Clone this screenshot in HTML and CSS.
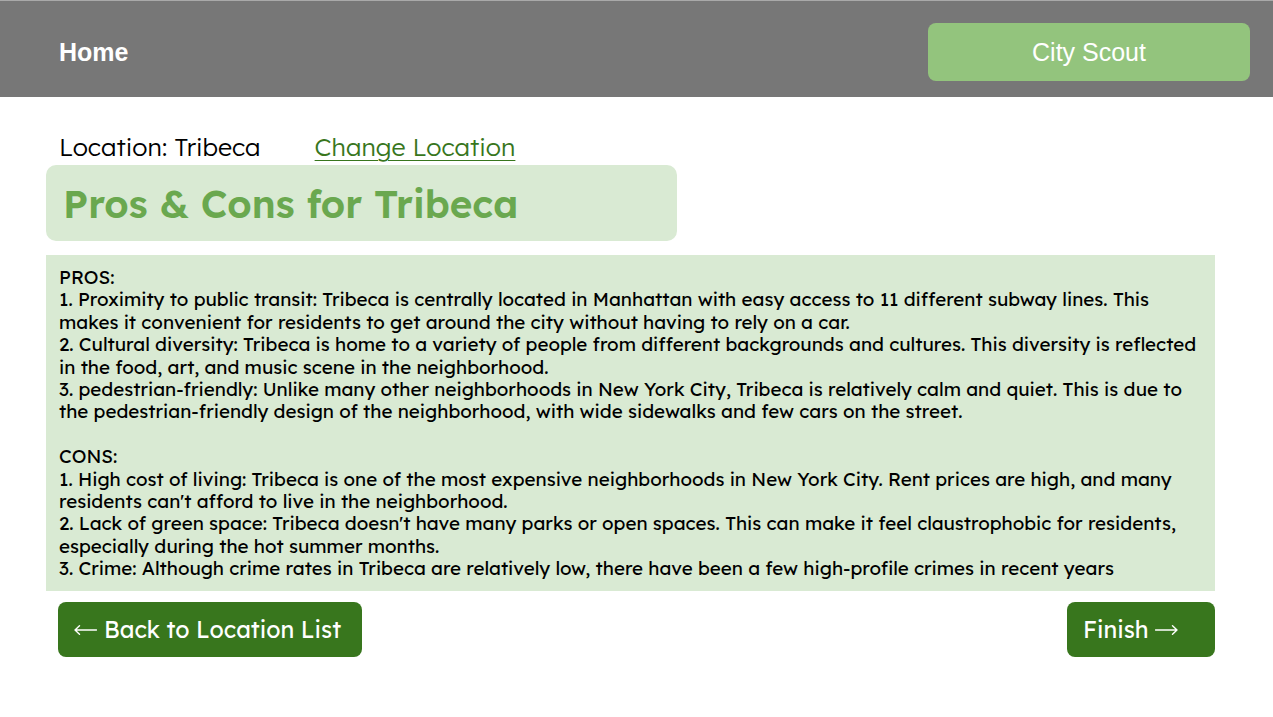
FILE: index.html
```html
<!DOCTYPE html>
<html lang="en">
<head>
<meta charset="utf-8">
<title>City Scout - Pros &amp; Cons</title>
<link rel="stylesheet" href="styles.css">
</head>
<body>
<header class="topbar">
  <a class="home" href="#">Home</a>
  <a class="brand" href="#">City Scout</a>
</header>
<main class="page">
  <div class="loc-row">
    <span class="loc">Location: Tribeca</span>
    <a class="change" href="#">Change Location</a>
  </div>
  <div class="title-box">
    <h1 class="title">Pros &amp; Cons for Tribeca</h1>
  </div>
  <section class="content">
    <p class="para">PROS:<br>1. Proximity to public transit: Tribeca is centrally located in Manhattan with easy access to 11 different subway lines. This<br>makes it convenient for residents to get around the city without having to rely on a car.<br>2. Cultural diversity: Tribeca is home to a variety of people from different backgrounds and cultures. This diversity is reflected<br>in the food, art, and music scene in the neighborhood.<br>3. pedestrian-friendly: Unlike many other neighborhoods in New York City, Tribeca is relatively calm and quiet. This is due to<br>the pedestrian-friendly design of the neighborhood, with wide sidewalks and few cars on the street.</p>
    <p class="para">CONS:<br>1. High cost of living: Tribeca is one of the most expensive neighborhoods in New York City. Rent prices are high, and many<br>residents can't afford to live in the neighborhood.<br>2. Lack of green space: Tribeca doesn't have many parks or open spaces. This can make it feel claustrophobic for residents,<br>especially during the hot summer months.<br>3. Crime: Although crime rates in Tribeca are relatively low, there have been a few high-profile crimes in recent years</p>
  </section>
  <div class="actions">
    <a class="btn btn-back" href="#"><svg class="arrow" width="23" height="12" viewBox="0 0 23 12" aria-hidden="true"><path d="M1 6H22.5M1 6L5.5 1.8M1 6L5.5 10.2" fill="none" stroke="#fff" stroke-width="1.4" stroke-linecap="round"/></svg>Back to Location List</a>
    <a class="btn btn-finish" href="#">Finish<svg class="arrow" width="23" height="12" viewBox="0 0 23 12" aria-hidden="true"><path d="M0.5 6H22M22 6L17.5 1.8M22 6L17.5 10.2" fill="none" stroke="#fff" stroke-width="1.4" stroke-linecap="round"/></svg></a>
  </div>
</main>
</body>
</html>
```

FILE: styles.css
```css
* { box-sizing: border-box; }
html, body { margin: 0; padding: 0; background: #fff; }
body { font-family: "Lexend", "Noto Sans", "DejaVu Sans", sans-serif; color: #000; }
a { text-decoration: none; }

.topbar {
  height: 97px;
  background: #777777;
  border-top: 1px solid #a9a9a9;
  display: flex;
  align-items: center;
  justify-content: space-between;
  padding: 0 23px 0 59px;
}
.home {
  margin-top: 6px;
  font-family: "Liberation Sans", Arial, sans-serif;
  font-weight: bold;
  font-size: 25px;
  color: #fff;
}
.brand {
  width: 322px;
  height: 58px;
  margin-top: 6px;
  background: #93c47d;
  border-radius: 8px;
  color: #fff;
  font-family: "Liberation Sans", Arial, sans-serif;
  font-size: 25px;
  display: flex;
  align-items: center;
  justify-content: center;
}

.page { padding: 0 58px 0 46px; }
.loc-row {
  display: flex;
  gap: 54px;
  padding: 33px 0 0 13px;
  font-size: 25px;
  line-height: 34px;
  font-weight: 300;
}
.change { color: #38761d; text-decoration: underline; text-underline-offset: 4px; text-decoration-thickness: 1px; }

.title-box {
  width: 631px;
  height: 76px;
  margin-top: 1px;
  background: #d9ead3;
  border-radius: 10px;
  display: flex;
  align-items: center;
  padding-left: 17px;
}
.title {
  margin: 0;
  font-size: 38.6px;
  font-weight: 600;
  color: #6aa84f;
}

.content {
  margin-top: 14px;
  width: 1169px;
  height: 336px;
  background: #d9ead3;
  padding: 11px 13px;
  font-size: 18.77px;
  line-height: 22.4px;
}
.para { margin: 0 0 22.4px; }

.actions {
  display: flex;
  justify-content: space-between;
  padding: 11px 0 0 12px;
  width: 1169px;
}
.btn {
  height: 55px;
  background: #38761d;
  color: #fff;
  border-radius: 8px;
  font-size: 23.2px;
  display: flex;
  align-items: center;
  gap: 7px;
  padding: 0 15px 0 16px;
}
.btn-back { width: 304px; }
.btn-finish { width: 148px; gap: 6px; }
.arrow { display: block; flex: none; margin-top: 1px; }
```
